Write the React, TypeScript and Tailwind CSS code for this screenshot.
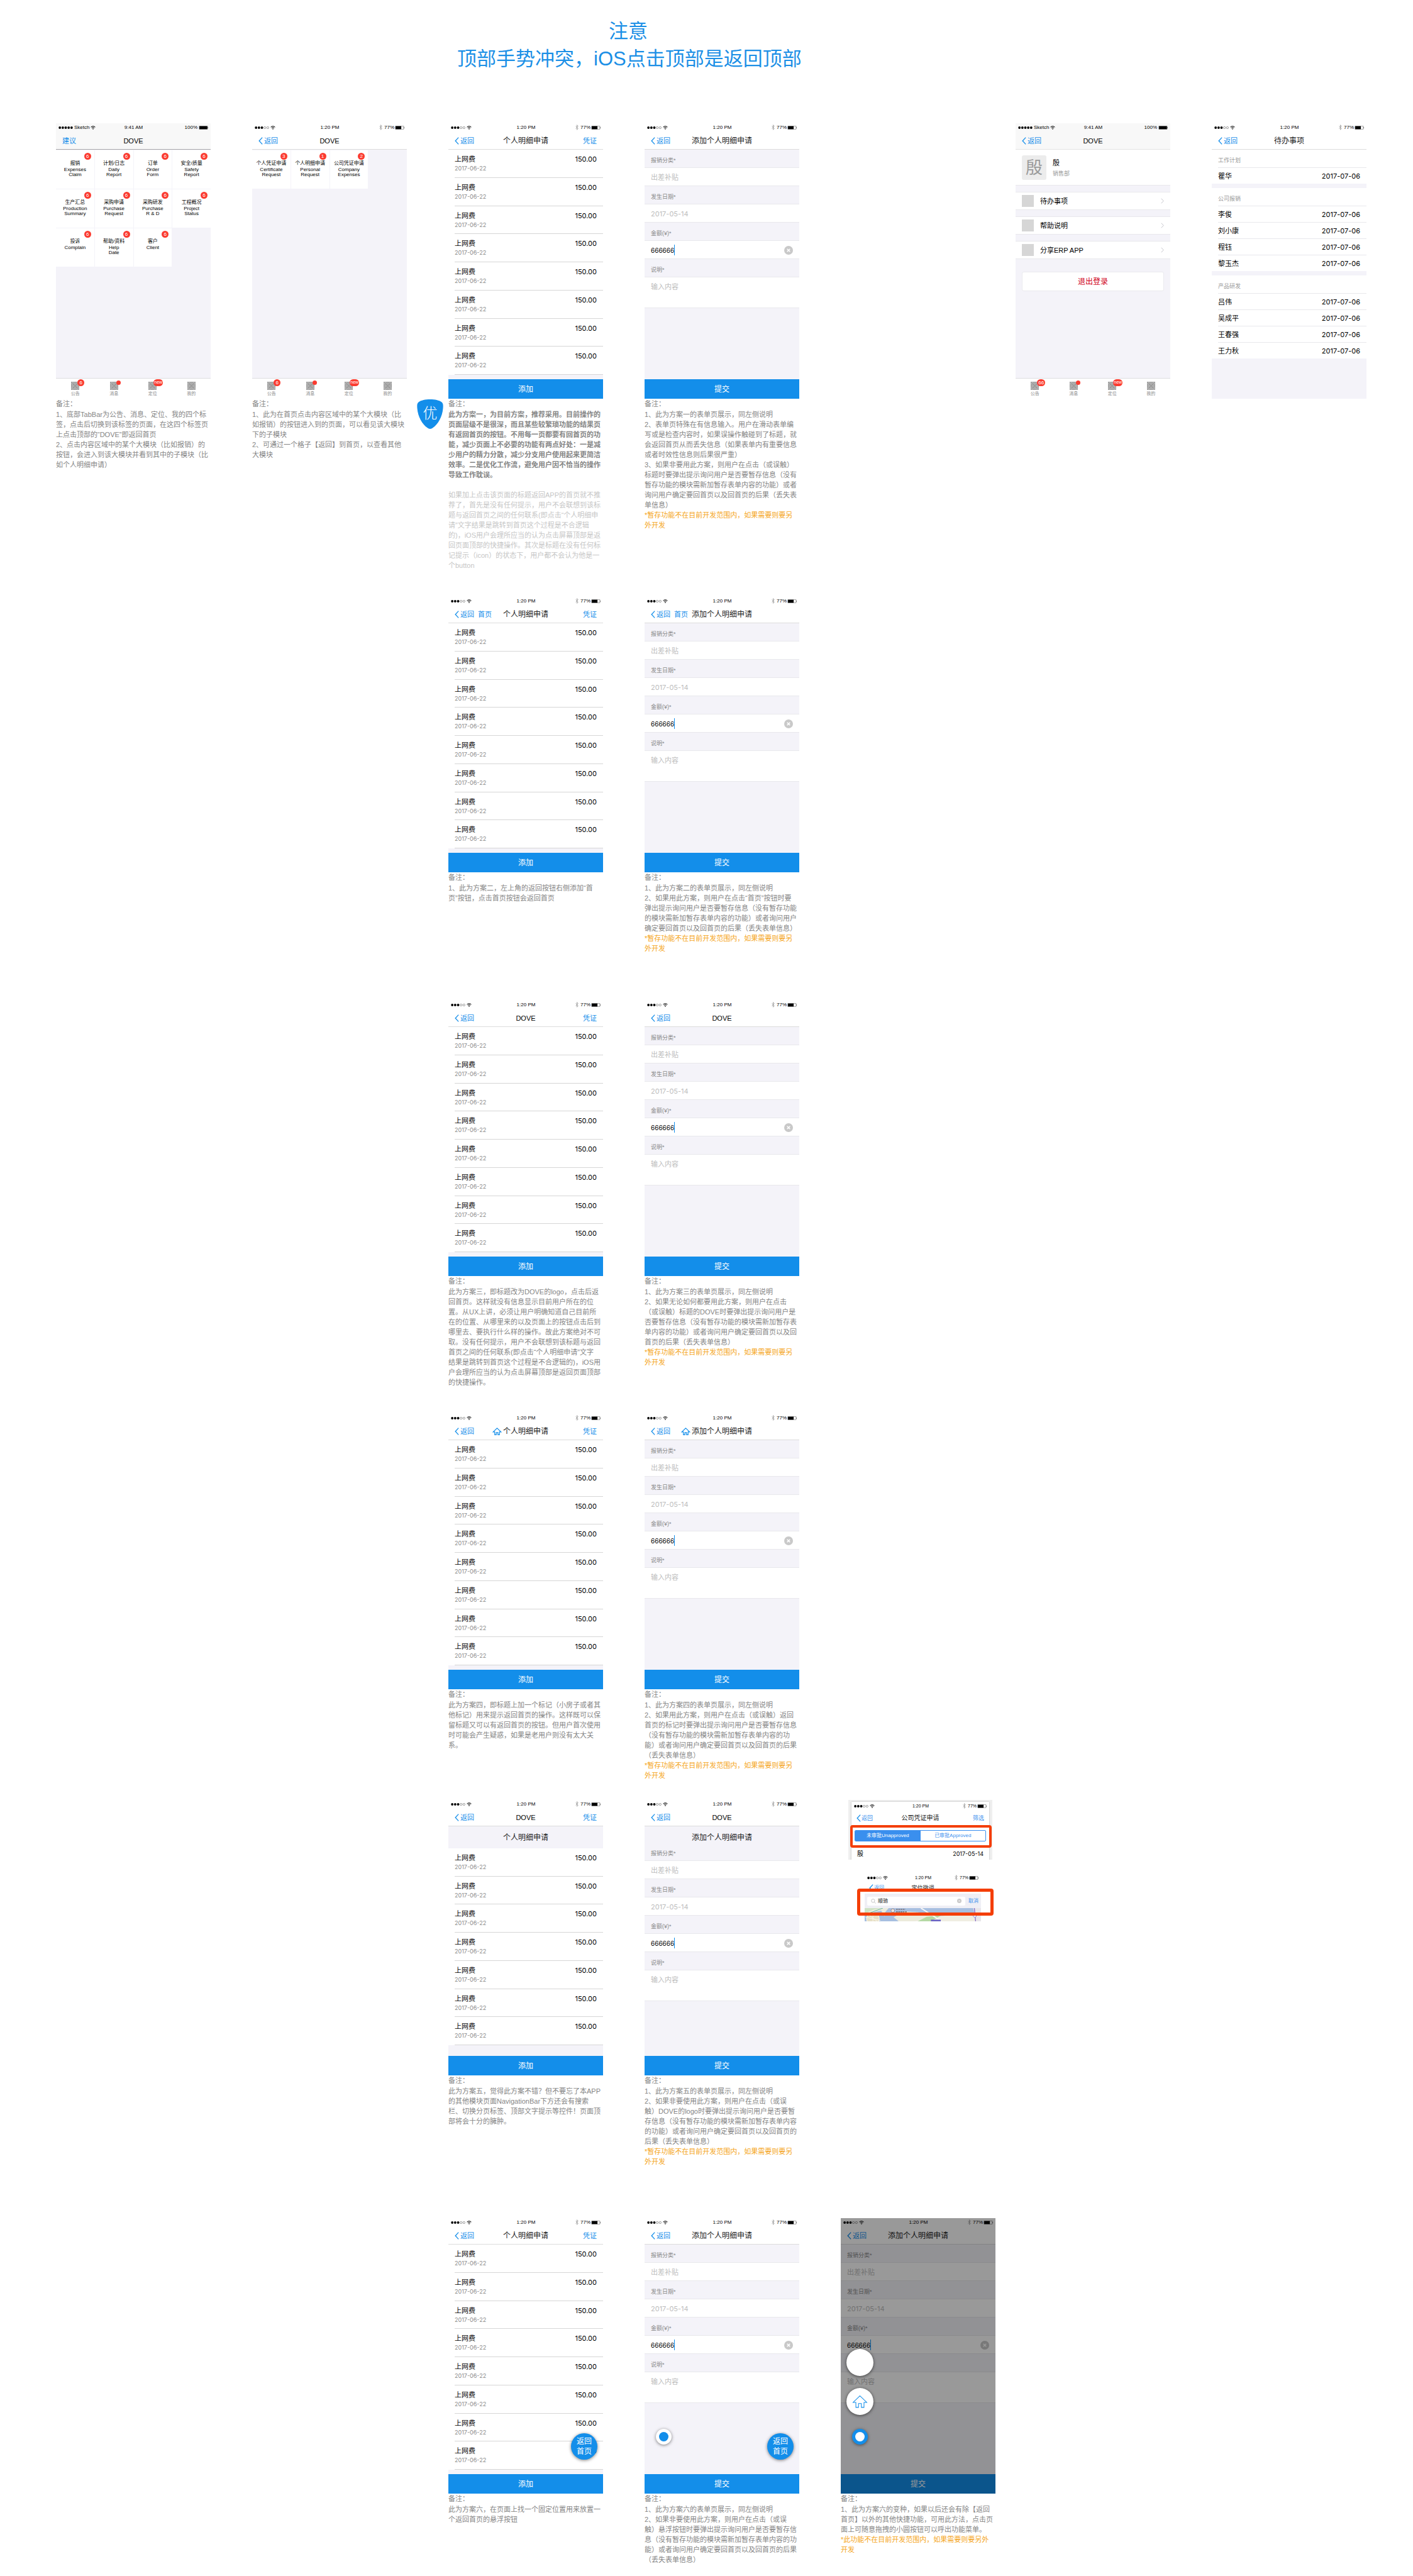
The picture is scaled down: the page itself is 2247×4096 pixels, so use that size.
import React, { createContext, useContext, useId } from "react";

const Dense = createContext(false);

/* ---------- small drawings ---------- */

function Signal({ filled }: { filled: number }) {
  return (
    <svg className="h-[4px] w-[23px]" viewBox="0 0 34 6" aria-hidden="true">
      {[0, 1, 2, 3, 4].map((i) => (
        <circle
          key={i}
          cx={3 + i * 7}
          cy="3"
          r={i < filled ? 2.9 : 2.5}
          fill={i < filled ? "#000" : "none"}
          stroke={i < filled ? "none" : "#333"}
          strokeWidth="0.7"
        />
      ))}
    </svg>
  );
}

function Wifi() {
  return (
    <svg className="h-[6px] w-[8px]" viewBox="0 0 12 9" fill="none" stroke="#000" aria-hidden="true">
      <path d="M0.8 3.2a7.4 7.4 0 0 1 10.4 0" strokeWidth="1.5" />
      <path d="M2.7 5.3a4.7 4.7 0 0 1 6.6 0" strokeWidth="1.4" />
      <path d="M6 9 4.2 7.1a2.6 2.6 0 0 1 3.6 0Z" fill="#000" stroke="none" />
    </svg>
  );
}

function Bluetooth() {
  return (
    <svg className="h-[9px] w-[5px]" viewBox="0 0 7 13" fill="none" stroke="#8a8a8a" strokeWidth="1" aria-hidden="true">
      <path d="M0.6 3.6 6.2 9 3.5 12V1l2.7 2.9L0.6 9.4" />
    </svg>
  );
}

function Battery({ full }: { full?: boolean }) {
  return (
    <svg className="h-[6px] w-[16px]" viewBox="0 0 25 10" aria-hidden="true">
      <rect x="0.5" y="0.5" width="22" height="9" rx="1" fill="#fff" fillOpacity="0" stroke="#222" strokeWidth="0.8" />
      <rect x="1" y="1" width={full ? 21 : 15} height="8" fill="#000" />
      <path d="M23.3 3.2c1.4.4 1.4 3.2 0 3.6Z" fill="#000" />
    </svg>
  );
}

function BackChevron() {
  return (
    <svg className="h-[12px] w-[7px]" viewBox="0 0 10 18" fill="none" stroke="#138eea" strokeWidth="2" aria-hidden="true">
      <path d="M9 1 1.5 9 9 17" />
    </svg>
  );
}

function HomeIcon({ className, stroke }: { className: string; stroke: number }) {
  return (
    <svg className={className} viewBox="0 0 24 20" fill="none" stroke="#138eea" strokeWidth={stroke} aria-hidden="true">
      <path d="M12 1.4 22.4 11.4H18.2V19H14.2V13.2H9.8V19H5.8V11.4H1.6Z" />
    </svg>
  );
}

function ClearIcon({ className }: { className: string }) {
  return (
    <svg className={className} viewBox="0 0 22 22" aria-hidden="true">
      <circle cx="11" cy="11" r="11" fill="#c9c9c9" />
      <path d="M7.4 7.4 14.6 14.6M14.6 7.4 7.4 14.6" stroke="#fff" strokeWidth="2.4" />
    </svg>
  );
}

function PatternIcon() {
  return (
    <svg className="h-[13px] w-[13px]" viewBox="0 0 40 40" fill="none" stroke="#767676" strokeWidth="1.5" aria-hidden="true">
      <rect x="0" y="0" width="40" height="40" fill="#dedede" stroke="none" />
      <rect x="1" y="1" width="38" height="38" />
      <path d="M8 0V40M14 0V40M20 0V40M26 0V40M32 0V40M0 8H40M0 14H40M0 20H40M0 26H40M0 32H40" strokeWidth="1" />
      <path d="M0 0 40 40M40 0 0 40" />
      <circle cx="20" cy="20" r="17" />
      <circle cx="20" cy="20" r="11" />
      <circle cx="20" cy="20" r="5" />
    </svg>
  );
}

/* ---------- phone chrome ---------- */

function StatusBar({ sketch }: { sketch?: boolean }) {
  const dense = useContext(Dense);
  return (
    <div
      className={
        "grid h-[13px] shrink-0 grid-cols-[1fr_auto_1fr] items-center pr-[3px] pl-[4px] leading-[12px] text-black " +
        (dense ? "text-[7px]" : "text-[8px]")
      }
    >
      <div className="flex items-center gap-[2px]">
        <Signal filled={sketch ? 5 : 3} />
        {sketch && <span>Sketch</span>}
        <Wifi />
      </div>
      <span className="pt-px">{sketch ? "9:41 AM" : "1:20 PM"}</span>
      <div className="flex items-center justify-end">
        {!sketch && <Bluetooth />}
        <span className={sketch ? "mr-[2px]" : "mr-px ml-[3px]"}>{sketch ? "100%" : "77%"}</span>
        <Battery full={sketch} />
      </div>
    </div>
  );
}

type NavProps = {
  title: string;
  left?: string;
  back?: boolean;
  home?: boolean;
  houseMark?: boolean;
  right?: string;
};

function NavBar({ title, left = "返回", back = true, home, houseMark, right }: NavProps) {
  const latin = title === "DOVE";
  return (
    <div className="grid h-[29px] shrink-0 grid-cols-[1fr_auto_1fr] items-center px-[10px] text-[11px] leading-[16px] text-[#138eea]">
      <div className="flex items-center gap-[6px]">
        <button type="button" className="flex items-center gap-[2px]">
          {back && <BackChevron />}
          {left}
        </button>
        {home && <button type="button">首页</button>}
      </div>
      <h2 className={"relative whitespace-nowrap " + (latin ? "text-[11px] text-black" : "text-[12px] text-[#222]")}>
        {houseMark && (
          <span className="absolute top-[2px] right-full mr-[2px]">
            <HomeIcon className="h-[12px] w-[15px]" stroke={2} />
          </span>
        )}
        {title}
      </h2>
      <div className="text-right">{right && <button type="button">{right}</button>}</div>
    </div>
  );
}

function Header({ nav, sketch, line }: { nav: NavProps; sketch?: boolean; line: string }) {
  return (
    <header className={"flex h-[42px] shrink-0 flex-col border-b " + line + (sketch ? " bg-[#f8f8f8]" : " bg-white")}>
      <StatusBar sketch={sketch} />
      <NavBar {...nav} />
    </header>
  );
}

function Phone({ children }: { children: React.ReactNode }) {
  return <section className="relative flex h-[438px] flex-col bg-[#f4f3f9]">{children}</section>;
}

function TabBar({ badge }: { badge: string }) {
  const red = "absolute flex items-center justify-center rounded-full bg-[#fb3b30] text-white ";
  const tabs = [
    { label: "公告", mark: <span className={red + "-top-[4px] left-[10px] h-[11px] min-w-[11px] px-[2px] text-[8px] leading-[10px]"}>{badge}</span> },
    { label: "消息", mark: <span className={red + "-top-[2px] left-[10px] size-[7px]"} /> },
    { label: "定位", mark: <span className={red + "-top-[4px] left-[8px] h-[11px] w-[15px] pb-[2px] text-[7px] leading-[8px]"}>new</span> },
    { label: "我的", mark: null },
  ];
  return (
    <nav className="mt-auto grid h-[33px] shrink-0 grid-cols-4 border-t border-[#dcdce0] bg-white">
      {tabs.map((t) => (
        <button key={t.label} type="button" className="flex flex-col items-center pt-[5px] text-[7px] leading-[10px] text-[#8a8a8a]">
          <span className="relative">
            <PatternIcon />
            {t.mark}
          </span>
          <span className="mt-px">{t.label}</span>
        </button>
      ))}
    </nav>
  );
}

/* ---------- notes ---------- */

type Block = { tone?: "bold" | "faint" | "warn"; lines: string[] };

const tones = {
  plain: "text-[#858585]",
  bold: "font-semibold text-[#858585]",
  faint: "mt-[16px] text-[#c6c6c6]",
  warn: "text-[#f5a623]",
};

function Notes({ blocks }: { blocks: Block[] }) {
  return (
    <div className="text-[11px] leading-[16px] whitespace-pre">
      <h3 className="mb-px text-[#858585]">备注：</h3>
      {blocks.map((b, i) => (
        <p key={i} className={tones[b.tone ?? "plain"]}>
          {b.lines.join("\n")}
        </p>
      ))}
    </div>
  );
}

/* ---------- screens ---------- */

type Cell = { zh: string; en: string; count: number };

function ModuleGrid({ cells }: { cells: Cell[] }) {
  return (
    <ul className="mt-px grid auto-rows-[61px] grid-cols-4 gap-px">
      {cells.map((c) => (
        <li key={c.zh} className="relative bg-white">
          <a href="#module" className="block pt-[15px] text-center text-[8px] text-black">
            <span className="block leading-[12px] whitespace-nowrap">{c.zh}</span>
            <span className="block leading-[8px] whitespace-pre-line">{c.en}</span>
          </a>
          <span className="absolute top-[4px] right-[5px] flex size-[11px] items-center justify-center rounded-full bg-[#fb3b30] text-[8px] leading-[10px] text-white">
            {c.count}
          </span>
        </li>
      ))}
    </ul>
  );
}

const homeCells: Cell[] = [
  { zh: "报销", en: "Expenses\nClaim", count: 6 },
  { zh: "计划/日志", en: "Daily\nReport", count: 6 },
  { zh: "订单", en: "Order\nForm", count: 6 },
  { zh: "安全/质量", en: "Safety\nReport", count: 6 },
  { zh: "生产汇总", en: "Production\nSummary", count: 6 },
  { zh: "采购申请", en: "Purchase\nRequest", count: 6 },
  { zh: "采购研发", en: "Purchase\nR＆D".replace("＆", " & "), count: 6 },
  { zh: "工程概况", en: "Project\nStatus", count: 6 },
  { zh: "投诉", en: "Complain", count: 6 },
  { zh: "帮助/资料", en: "Help\nDate", count: 6 },
  { zh: "客户", en: "Client", count: 6 },
];

const subCells: Cell[] = [
  { zh: "个人凭证申请", en: "Certificate\nRequest", count: 3 },
  { zh: "个人明细申请", en: "Personal\nRequest", count: 1 },
  { zh: "公司凭证申请", en: "Company\nExpenses", count: 2 },
];

const lightLine = "border-[#dcdcdc]";

function FloatHome() {
  return (
    <button
      type="button"
      className="absolute top-[342px] right-[9px] flex size-[42px] flex-col items-center justify-center rounded-full bg-[#138eea] text-[12px] leading-[16px] text-white shadow-[0_1px_5px_rgba(0,0,0,0.5)]"
    >
      <span>返回</span>
      <span>首页</span>
    </button>
  );
}

function FloatDot({ active }: { active?: boolean }) {
  return (
    <button
      type="button"
      aria-label="快捷功能"
      className={
        "absolute top-[335px] left-[18px] flex size-[25px] items-center justify-center rounded-full shadow-[0_1px_5px_rgba(0,0,0,0.5)] " +
        (active ? "bg-[#138eea]" : "bg-white")
      }
    >
      <span className={"size-[15px] rounded-full " + (active ? "bg-white" : "bg-[#138eea]")} />
    </button>
  );
}

function SubTitle({ children }: { children: React.ReactNode }) {
  return (
    <div className="flex h-[35px] shrink-0 items-center justify-center text-[12px] leading-[16px] text-[#222]">
      {children}
    </div>
  );
}

function ListPhone({ nav, subtitle, float }: { nav: NavProps; subtitle?: string; float?: boolean }) {
  const rows = Array.from({ length: subtitle ? 7 : 8 }, (_, i) => i);
  return (
    <Phone>
      <Header nav={nav} line={lightLine} />
      {subtitle && <SubTitle>{subtitle}</SubTitle>}
      <ul className={"flex flex-1 flex-col bg-white " + (subtitle ? "mb-[17px]" : "mb-[7px]")}>
        {rows.map((i) => (
          <li key={i} className="ml-[10px] flex flex-1 items-start justify-between border-b border-[#d6d6d6] pt-[7px] pr-[10px]">
            <div>
              <p className="text-[11px] leading-[16px] text-black">上网费</p>
              <p className="font-[Inter] text-[9px] leading-[13px] text-[#8a8a8a]">2017-06-22</p>
            </div>
            <p className="font-[Inter] text-[11px] leading-[16px] text-black">150.00</p>
          </li>
        ))}
      </ul>
      <button type="button" className="h-[31px] shrink-0 bg-[#138eea] text-[12px] leading-[16px] text-white">
        添加
      </button>
      {float && <FloatHome />}
    </Phone>
  );
}

function FieldLabel({ id, short, children }: { id: string; short?: boolean; children: React.ReactNode }) {
  return (
    <label
      htmlFor={id}
      className={
        "flex shrink-0 items-end border-b border-[#e8e8ec] px-[10px] pb-[5px] text-[9px] leading-[12px] text-[#8a8a8a] " +
        (short ? "h-[20px]" : "h-[29px]")
      }
    >
      {children}
    </label>
  );
}

function FormPhone({
  nav,
  subtitle,
  children,
}: {
  nav: NavProps;
  subtitle?: string;
  children?: React.ReactNode;
}) {
  const id = useId();
  const field = "flex h-[29px] shrink-0 items-center border-b border-[#e8e8ec] bg-white px-[10px] pt-px text-[11px] leading-[16px]";
  const input = "w-full bg-transparent outline-none placeholder:text-[#bdbdbd]";
  return (
    <Phone>
      <Header nav={nav} line={lightLine} />
      {subtitle && <SubTitle>{subtitle}</SubTitle>}
      <form className="flex flex-1 flex-col" onSubmit={(e) => e.preventDefault()}>
        <FieldLabel id={id + "a"} short={!!subtitle}>报销分类*</FieldLabel>
        <div className={field}>
          <input id={id + "a"} className={input} placeholder="出差补贴" />
        </div>
        <FieldLabel id={id + "b"}>发生日期*</FieldLabel>
        <div className={field}>
          <input id={id + "b"} className={input + " font-[Inter]"} placeholder="2017-05-14" />
        </div>
        <FieldLabel id={id + "c"}>金额(¥)*</FieldLabel>
        <div className={field}>
          <input id={id + "c"} className="field-sizing-content bg-transparent font-[Inter] text-[10px] text-black outline-none" defaultValue="666666" />
          <span className="h-[17px] w-px bg-[#138eea]" />
          <button type="button" aria-label="清除" className="ml-auto">
            <ClearIcon className="size-[14px]" />
          </button>
        </div>
        <FieldLabel id={id + "d"}>说明*</FieldLabel>
        <textarea
          id={id + "d"}
          className="h-[49px] shrink-0 resize-none border-b border-[#e8e8ec] bg-white px-[10px] pt-[7px] text-[11px] leading-[16px] outline-none placeholder:text-[#bdbdbd]"
          placeholder="输入内容"
        />
        <button type="submit" className="mt-auto h-[31px] shrink-0 bg-[#138eea] text-[12px] leading-[16px] text-white">
          提交
        </button>
      </form>
      {children}
    </Phone>
  );
}

function ProfilePhone() {
  return (
    <Phone>
      <Header nav={{ title: "DOVE" }} sketch line="border-[#e4e4e4]" />
      <div className="flex h-[57px] shrink-0 items-start gap-[10px] border-b border-[#e8e8ec] bg-white px-[10px] pt-[9px]">
        <div className="flex size-[39px] items-center justify-center rounded-[3px] bg-[#ececec] text-[27px] leading-[32px] text-[#9b9b9b]">
          殷
        </div>
        <div className="pt-[4px]">
          <p className="text-[11px] leading-[16px] text-black">殷</p>
          <p className="mt-[3px] text-[9px] leading-[12px] text-[#9b9b9b]">销售部</p>
        </div>
      </div>
      {["待办事项", "帮助说明", "分享ERP APP"].map((t) => (
        <a
          key={t}
          href="#entry"
          className="mt-[10px] flex h-[29px] shrink-0 items-center gap-[10px] border-y border-[#e8e8ec] bg-white px-[10px] text-[11px] leading-[16px] text-black"
        >
          <span className="size-[19px] bg-[#d6d6d6]" />
          {t}
          <svg className="ml-auto h-[9px] w-[5px]" viewBox="0 0 8 14" fill="none" stroke="#c7c7cc" strokeWidth="1.6" aria-hidden="true">
            <path d="M1 1 7 7 1 13" />
          </svg>
        </a>
      ))}
      <button
        type="button"
        className="mx-[10px] mt-[20px] h-[31px] shrink-0 rounded-[3px] border border-[#eaeaee] bg-white text-[12px] leading-[16px] text-[#d0021b]"
      >
        退出登录
      </button>
      <TabBar badge="66" />
    </Phone>
  );
}

const todo = [
  { group: "工作计划", names: ["瞿华"] },
  { group: "公司报销", names: ["李俊", "刘小康", "程钰", "黎玉杰"] },
  { group: "产品研发", names: ["吕伟", "吴成平", "王春强", "王力秋"] },
];

function TodoPhone() {
  return (
    <Phone>
      <Header nav={{ title: "待办事项" }} line={lightLine} />
      <div className="flex flex-col gap-[7px]">
        {todo.map((g) => (
          <div key={g.group} className="bg-white pl-[10px]">
            <h3 className="flex h-[28px] items-end pb-[5px] text-[9px] leading-[12px] text-[#9b9b9b]">{g.group}</h3>
            <ul>
              {g.names.map((n) => (
                <li
                  key={n}
                  className="flex h-[26px] items-center justify-between border-t border-[#e8e8ec] pr-[10px] text-[11px] leading-[16px] text-black"
                >
                  <span>{n}</span>
                  <span className="font-[Inter]">2017-07-06</span>
                </li>
              ))}
            </ul>
          </div>
        ))}
      </div>
    </Phone>
  );
}

/* ---------- cropped samples beside option five ---------- */

function SegmentSample() {
  return (
    <div className="relative h-[95px] overflow-hidden bg-[#efefef] px-[5px] pt-[3px]">
      <div className="flex h-[95px] flex-col bg-white shadow-[0_0_2px_rgba(0,0,0,0.3)]">
        <StatusBar />
        <div className="grid h-[25px] grid-cols-[1fr_auto_1fr] items-center px-[8px] text-[9px] leading-[14px] text-[#3a8fee]">
          <button type="button" className="flex items-center gap-px">
            <BackChevron />
            返回
          </button>
          <h2 className="text-[10px] text-[#222]">公司凭证申请</h2>
          <button type="button" className="text-right">筛选</button>
        </div>
        <div className="mx-[5px] mt-[7px] grid h-[18px] shrink-0 grid-cols-2 overflow-hidden rounded-[2px] border border-[#3a8fee] text-[8px] leading-[12px]">
          <button type="button" className="bg-[#3a8fee] text-white">未审批Unapproved</button>
          <button type="button" className="text-[#3a8fee]">已审批Approved</button>
        </div>
        <div className="mt-[12px] flex justify-between px-[9px] text-[10px] leading-[16px] text-black">
          <span>殷</span>
          <span className="font-[Inter] text-[9px]">2017-05-14</span>
        </div>
      </div>
      <div className="absolute top-[40px] right-px left-[3px] h-[36px] rounded-[4px] border-4 border-[#f43e06]" />
    </div>
  );
}

function SearchSample() {
  return (
    <div className="relative mt-[22px] mr-[18px] ml-[26px]">
      <StatusBar />
      <div className="grid h-[19px] grid-cols-[1fr_auto_1fr] items-center px-[7px] text-[8px] leading-[12px] text-[#3a8fee]">
        <button type="button" className="flex items-center gap-px">
          <BackChevron />
          返回
        </button>
        <h2 className="text-[9px] text-[#222]">定位微调</h2>
      </div>
      <div className="flex h-[23px] items-center gap-[5px] bg-[#efeff5] px-[4px] text-[8px] leading-[12px]">
        <label className="flex h-[14px] min-w-0 flex-1 items-center gap-[3px] rounded-[2px] bg-white px-[6px]">
          <svg className="size-[8px] shrink-0" viewBox="0 0 12 12" fill="none" stroke="#b5b5b5" strokeWidth="1.2" aria-hidden="true">
            <circle cx="5" cy="5" r="4" />
            <path d="M8 8 11.4 11.4" />
          </svg>
          <input aria-label="搜索" className="w-full min-w-0 bg-transparent text-[#222] outline-none" defaultValue="顺驰" />
          <ClearIcon className="size-[7px] shrink-0" />
        </label>
        <button type="button" className="text-[#3a8fee]">取消</button>
      </div>
      <svg className="h-[21px] w-full" viewBox="0 0 281 32" preserveAspectRatio="none" aria-hidden="true">
        <rect width="281" height="32" fill="#a7bfe0" />
        <path d="M0 0H100L118 8 190 22 176 32H60L48 20 40 6 0 14Z" fill="#ecebdc" />
        <path d="M58 0H100L128 10 96 8 70 22 82 32H52L46 14Z" fill="#a7bfe0" />
        <path d="M0 14 20 4 42 0H0Z" fill="#cfe3c4" />
        <circle cx="20" cy="26" r="15" fill="#e6dfc6" stroke="#f7f3df" strokeWidth="2" />
        <path d="M2 22 38 30M20 11V32M8 15 30 32" stroke="#faf7ea" strokeWidth="1.4" />
        <path d="M6 14 44 0" stroke="#58b09a" strokeWidth="1.4" />
        <path d="M120 32 160 20 281 14V32Z" fill="#f0eee2" />
        <path d="M128 32 150 21 186 17 160 32Z" fill="#b5d9a5" />
        <path d="M136 0 186 32" stroke="#f7f7f7" strokeWidth="3" />
        <path d="M262 0H281V32H270Z" fill="#e9e6ea" />
        <path d="M265 0 268 32" stroke="#8a6fc9" strokeWidth="2" />
        <circle cx="266" cy="18" r="4" fill="#fff" stroke="#8a8ad0" strokeWidth="1.4" />
        <rect x="160" y="28" width="24" height="4" fill="#6a63c4" />
        <circle cx="68" cy="6" r="4.4" fill="#e7e2e0" stroke="#8d7a78" strokeWidth="1.2" />
        <path d="M76 3H98M76 9H102" stroke="#7d7478" strokeWidth="2.4" strokeDasharray="4 1.4" />
      </svg>
      <div className="absolute top-[24px] -right-[20px] -left-[12px] h-[43px] rounded-[4px] border-5 border-[#f43e06]" />
    </div>
  );
}

/* ---------- page ---------- */

function Row({ className, children }: { className: string; children: React.ReactNode }) {
  return <div className={"grid grid-cols-5 items-start gap-x-[66px] " + className}>{children}</div>;
}

const reserve: Block = { tone: "warn", lines: ["*暂存功能不在目前开发范围内，如果需要则要另", "外开发"] };

export default function App() {
  const list = "个人明细申请";
  const form = "添加个人明细申请";
  return (
    <main
      lang="zh-CN"
      className="grid w-full grid-cols-[1494fr_558fr] gap-x-8 bg-white pt-[28px] pr-[74px] pb-[18px] pl-[89px] font-['Liberation_Sans','Noto_Sans_CJK_SC',sans-serif]"
    >
      <div className="min-w-0">
        <Row className="">
          <h1 className="col-span-2 col-start-3 h-[168px] pl-[14px] text-center text-[31px] leading-[44px] whitespace-nowrap text-[#1b8fe6]">
            注意
            <br />
            顶部手势冲突，iOS点击顶部是返回顶部
          </h1>
        </Row>

        <Row className="">
          <article>
            <Phone>
              <Header nav={{ title: "DOVE", left: "建议", back: false }} sketch line="border-[#a7a7aa]" />
              <ModuleGrid cells={homeCells} />
              <TabBar badge="6" />
            </Phone>
            <Notes
              blocks={[
                {
                  lines: [
                    "1、底部TabBar为公告、消息、定位、我的四个标",
                    "签，点击后切换到该标签的页面，在这四个标签页",
                    "上点击顶部的“DOVE”即返回首页",
                    "2、点击内容区域中的某个大模块（比如报销）的",
                    "按钮，会进入到该大模块并看到其中的子模块（比",
                    "如个人明细申请）",
                  ],
                },
              ]}
            />
          </article>
          <article>
            <Phone>
              <Header nav={{ title: "DOVE" }} line={lightLine} />
              <ModuleGrid cells={subCells} />
              <TabBar badge="6" />
            </Phone>
            <Notes
              blocks={[
                {
                  lines: [
                    "1、此为在首页点击内容区域中的某个大模块（比",
                    "如报销）的按钮进入到的页面，可以看见该大模块",
                    "下的子模块",
                    "2、可通过一个格子【返回】到首页，以查看其他",
                    "大模块",
                  ],
                },
              ]}
            />
          </article>
          <article>
            <ListPhone nav={{ title: list, right: "凭证" }} />
            <div className="relative">
              <div className="absolute top-px -left-[50px] h-[47px] w-[42px]">
                <svg className="absolute inset-0 size-full" viewBox="0 0 63 71" aria-hidden="true">
                  <path d="M31.500 0C43 0 53 2 59 6.500C63 9.500 63 14 62.500 21C61 42 50 60 38 68.500C33.500 71.700 29.500 71.700 25 68.500C13 60 2 42 .500 21C0 14 0 9.500 4 6.500C10 2 20 0 31.500 0Z" fill="#138eea" />
                </svg>
                <span className="relative block pt-[7px] text-center text-[23px] leading-[30px] font-light text-white">优</span>
              </div>
              <Notes
                blocks={[
                  {
                    tone: "bold",
                    lines: [
                      "此为方案一，为目前方案，推荐采用。目前操作的",
                      "页面层级不是很深，而且某些较繁琐功能的结果页",
                      "有返回首页的按钮。不用每一页都要有回首页的功",
                      "能，减少页面上不必要的功能有两点好处：一是减",
                      "少用户的精力分散，减少分支用户使用起来更简洁",
                      "效率。二是优化工作流，避免用户因不恰当的操作",
                      "导致工作耽误。",
                    ],
                  },
                  {
                    tone: "faint",
                    lines: [
                      "如果加上点击该页面的标题返回APP的首页就不推",
                      "荐了，首先是没有任何提示，用户不会联想到该标",
                      "题与返回首页之间的任何联系(即点击“个人明细申",
                      "请”文字结果是跳转到首页这个过程是不合逻辑",
                      "的)，iOS用户会理所应当的认为点击屏幕顶部是返",
                      "回页面顶部的快捷操作。其次是标题在没有任何标",
                      "记提示（icon）的状态下，用户都不会认为他是一",
                      "个button",
                    ],
                  },
                ]}
              />
            </div>
          </article>
          <article>
            <FormPhone nav={{ title: form }} />
            <Notes
              blocks={[
                {
                  lines: [
                    "1、此为方案一的表单页展示，同左侧说明",
                    "2、表单页特殊在有信息输入。用户在滑动表单编",
                    "写或是检查内容时，如果误操作触碰到了标题，就",
                    "会返回首页从而丢失信息（如果表单内有重要信息",
                    "或者时效性信息则后果很严重）",
                    "3、如果非要用此方案，则用户在点击（或误触）",
                    "标题时要弹出提示询问用户是否要暂存信息（没有",
                    "暂存功能的模块需新加暂存表单内容的功能）或者",
                    "询问用户确定要回首页以及回首页的后果（丢失表",
                    "单信息）",
                  ],
                },
                reserve,
              ]}
            />
          </article>
        </Row>

        <Row className="mt-[42px]">
          <article className="col-start-3">
            <ListPhone nav={{ title: list, home: true, right: "凭证" }} />
            <Notes blocks={[{ lines: ["1、此为方案二，左上角的返回按钮右侧添加“首", "页”按钮，点击首页按钮会返回首页"] }]} />
          </article>
          <article>
            <FormPhone nav={{ title: form, home: true }} />
            <Notes
              blocks={[
                {
                  lines: [
                    "1、此为方案二的表单页展示，同左侧说明",
                    "2、如果用此方案，则用户在点击“首页”按钮时要",
                    "弹出提示询问用户是否要暂存信息（没有暂存功能",
                    "的模块需新加暂存表单内容的功能）或者询问用户",
                    "确定要回首页以及回首页的后果（丢失表单信息）",
                  ],
                },
                reserve,
              ]}
            />
          </article>
        </Row>

        <Row className="mt-[75px]">
          <article className="col-start-3">
            <ListPhone nav={{ title: "DOVE", right: "凭证" }} />
            <Notes
              blocks={[
                {
                  lines: [
                    "此为方案三，即标题改为DOVE的logo，点击后返",
                    "回首页。这样就没有信息显示目前用户所在的位",
                    "置。从UX上讲，必须让用户明确知道自己目前所",
                    "在的位置、从哪里来的以及页面上的按钮点击后到",
                    "哪里去、要执行什么样的操作。故此方案绝对不可",
                    "取。没有任何提示，用户不会联想到该标题与返回",
                    "首页之间的任何联系(即点击“个人明细申请”文字",
                    "结果是跳转到首页这个过程是不合逻辑的)，iOS用",
                    "户会理所应当的认为点击屏幕顶部是返回页面顶部",
                    "的快捷操作。",
                  ],
                },
              ]}
            />
          </article>
          <article>
            <FormPhone nav={{ title: "DOVE" }} />
            <Notes
              blocks={[
                {
                  lines: [
                    "1、此为方案三的表单页展示，同左侧说明",
                    "2、如果无论如何都要用此方案，则用户在点击",
                    "（或误触）标题的DOVE时要弹出提示询问用户是",
                    "否要暂存信息（没有暂存功能的模块需新加暂存表",
                    "单内容的功能）或者询问用户确定要回首页以及回",
                    "首页的后果（丢失表单信息）",
                  ],
                },
                reserve,
              ]}
            />
          </article>
        </Row>

        <Row className="mt-[42px]">
          <article className="col-start-3">
            <ListPhone nav={{ title: list, houseMark: true, right: "凭证" }} />
            <Notes
              blocks={[
                {
                  lines: [
                    "此为方案四，即标题上加一个标记（小房子或者其",
                    "他标记）用来提示返回首页的操作。这样既可以保",
                    "留标题又可以有返回首页的按钮。但用户首次使用",
                    "时可能会产生疑惑，如果是老用户则没有太大关",
                    "系。",
                  ],
                },
              ]}
            />
          </article>
          <article>
            <FormPhone nav={{ title: form, houseMark: true }} />
            <Notes
              blocks={[
                {
                  lines: [
                    "1、此为方案四的表单页展示，同左侧说明",
                    "2、如果用此方案，则用户在点击（或误触）返回",
                    "首页的标记时要弹出提示询问用户是否要暂存信息",
                    "（没有暂存功能的模块需新加暂存表单内容的功",
                    "能）或者询问用户确定要回首页以及回首页的后果",
                    "（丢失表单信息）",
                  ],
                },
                reserve,
              ]}
            />
          </article>
        </Row>

        <Row className="mt-[31px]">
          <article className="col-start-3">
            <ListPhone nav={{ title: "DOVE", right: "凭证" }} subtitle={list} />
            <Notes
              blocks={[
                {
                  lines: [
                    "此为方案五，觉得此方案不错？但不要忘了本APP",
                    "的其他模块页面NavigationBar下方还会有搜索",
                    "栏、切换分页标签、顶部文字提示等控件！页面顶",
                    "部将会十分的臃肿。",
                  ],
                },
              ]}
            />
          </article>
          <article>
            <FormPhone nav={{ title: "DOVE" }} subtitle={form} />
            <Notes
              blocks={[
                {
                  lines: [
                    "1、此为方案五的表单页展示，同左侧说明",
                    "2、如果非要使用此方案，则用户在点击（或误",
                    "触）DOVE的logo时要弹出提示询问用户是否要暂",
                    "存信息（没有暂存功能的模块需新加暂存表单内容",
                    "的功能）或者询问用户确定要回首页以及回首页的",
                    "后果（丢失表单信息）",
                  ],
                },
                reserve,
              ]}
            />
          </article>
          <Dense.Provider value={true}>
            <aside className="pr-[5px] pl-[12px]">
              <SegmentSample />
              <SearchSample />
            </aside>
          </Dense.Provider>
        </Row>

        <Row className="mt-[82px]">
          <article className="col-start-3">
            <ListPhone nav={{ title: list, right: "凭证" }} float />
            <Notes blocks={[{ lines: ["此为方案六，在页面上找一个固定位置用来放置一", "个返回首页的悬浮按钮"] }]} />
          </article>
          <article>
            <FormPhone nav={{ title: form }}>
              <FloatDot />
              <FloatHome />
            </FormPhone>
            <Notes
              blocks={[
                {
                  lines: [
                    "1、此为方案六的表单页展示，同左侧说明",
                    "2、如果非要使用此方案，则用户在点击（或误",
                    "触）悬浮按钮时要弹出提示询问用户是否要暂存信",
                    "息（没有暂存功能的模块需新加暂存表单内容的功",
                    "能）或者询问用户确定要回首页以及回首页的后果",
                    "（丢失表单信息）",
                  ],
                },
              ]}
            />
          </article>
          <article>
            <FormPhone nav={{ title: form }}>
              <div className="absolute inset-0 bg-black/40" />
              <button
                type="button"
                aria-label="功能"
                className="absolute top-[208px] left-[9px] size-[43px] rounded-full bg-white shadow-[0_1px_5px_rgba(0,0,0,0.6)]"
              />
              <button
                type="button"
                aria-label="首页"
                className="absolute top-[270px] left-[9px] flex size-[43px] items-center justify-center rounded-full bg-white shadow-[0_1px_5px_rgba(0,0,0,0.6)]"
              >
                <HomeIcon className="h-[21px] w-[25px]" stroke={1} />
              </button>
              <FloatDot active />
            </FormPhone>
            <Notes
              blocks={[
                {
                  lines: [
                    "1、此为方案六的变种，如果以后还会有除【返回",
                    "首页】以外的其他快捷功能，可用此方法，点击页",
                    "面上可随意拖拽的小圆按钮可以呼出功能菜单。",
                  ],
                },
                { tone: "warn", lines: ["*此功能不在目前开发范围内，如果需要则要另外", "开发"] },
              ]}
            />
          </article>
        </Row>
      </div>

      <div className="grid grid-cols-2 items-start gap-x-[66px] pt-[168px]">
        <ProfilePhone />
        <TodoPhone />
      </div>
    </main>
  );
}
